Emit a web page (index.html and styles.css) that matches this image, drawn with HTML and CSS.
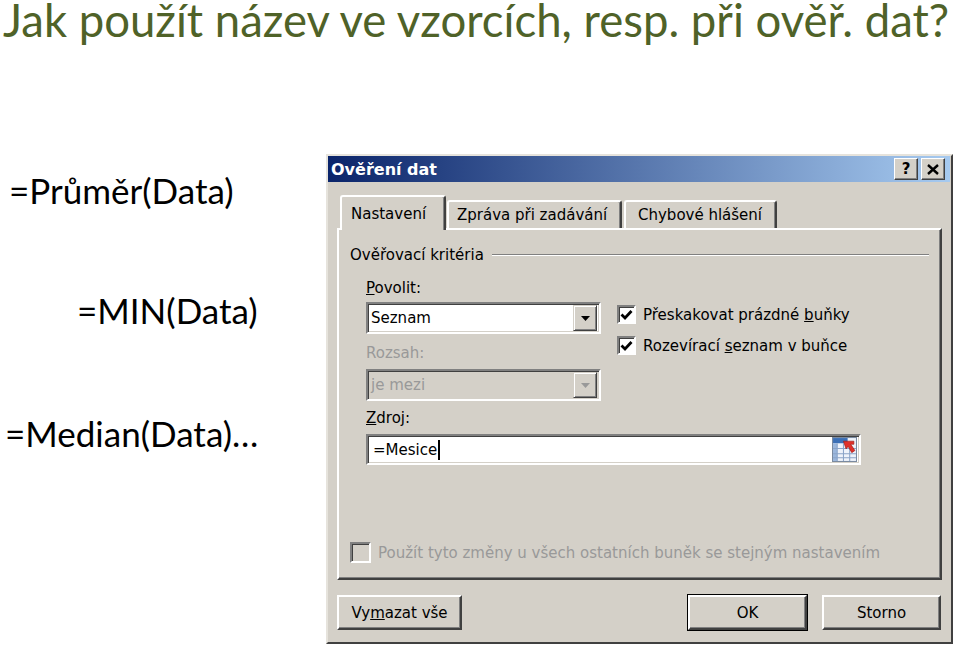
FILE: index.html
```html
<!DOCTYPE html>
<html lang="cs">
<head>
    <meta charset="UTF-8">
    <meta name="viewport" content="width=device-width, initial-scale=1.0">
    <title>Jak použít název ve vzorcích</title>
    <link rel="stylesheet" href="styles.css">
</head>
<body>
    <div class="slide">
        <h1 class="slide-title">Jak použít název ve vzorcích, resp. při ověř. dat?</h1>
        <div class="slide-body">
            <div class="formulas">
                <p class="formula formula-avg">=Průměr(Data)</p>
                <p class="formula formula-min">=MIN(Data)</p>
                <p class="formula formula-median">=Median(Data)…</p>
            </div>

            <div class="dialog">
                <div class="titlebar">
                    <span class="titlebar-text">Ověření dat</span>
                    <div class="titlebar-buttons">
                        <span class="tb-btn tb-help">?</span>
                        <span class="tb-btn">
                            <svg width="12" height="11" viewBox="0 0 12 11">
                                <path d="M1 1 L11 10 M11 1 L1 10" stroke="#000" stroke-width="2.4" fill="none"/>
                            </svg>
                        </span>
                    </div>
                </div>

                <div class="dialog-content">
                    <div class="tabs">
                        <div class="tab tab-active">Nastavení</div>
                        <div class="tab tab-msg">Zpráva při zadávání</div>
                        <div class="tab tab-err">Chybové hlášení</div>
                    </div>

                    <div class="tab-panel">
                        <div class="group-title">
                            <span>Ověřovací kritéria</span>
                            <span class="etched-line"></span>
                        </div>

                        <div class="criteria">
                            <div class="criteria-left">
                                <div class="field-label label-allow"><u>P</u>ovolit:</div>
                                <div class="combo">
                                    <span class="combo-text">Seznam</span>
                                    <span class="combo-btn">
                                        <svg width="9" height="5" viewBox="0 0 9 5"><path d="M0 0 H9 L4.5 5 Z" fill="#000"/></svg>
                                    </span>
                                </div>
                                <div class="field-label label-range disabled">Rozsah:</div>
                                <div class="combo combo-disabled">
                                    <span class="combo-text">je mezi</span>
                                    <span class="combo-btn">
                                        <svg width="9" height="5" viewBox="0 0 9 5"><path d="M0 0 H9 L4.5 5 Z" fill="#999"/></svg>
                                    </span>
                                </div>
                            </div>
                            <div class="criteria-right">
                                <div class="check check-first">
                                    <span class="check-box">
                                        <svg width="13" height="12" viewBox="0 0 13 12"><path d="M1.5 5.5 L5 9 L11.5 2" stroke="#000" stroke-width="2.8" fill="none"/></svg>
                                    </span>
                                    <span>Přeskakovat prázdné <u>b</u>uňky</span>
                                </div>
                                <div class="check check-second">
                                    <span class="check-box">
                                        <svg width="13" height="12" viewBox="0 0 13 12"><path d="M1.5 5.5 L5 9 L11.5 2" stroke="#000" stroke-width="2.8" fill="none"/></svg>
                                    </span>
                                    <span>Rozevírací <u>s</u>eznam v buňce</span>
                                </div>
                            </div>
                        </div>

                        <div class="field-label label-source"><u>Z</u>droj:</div>
                        <div class="ref-edit">
                            <span class="ref-text">=Mesice</span><span class="caret"></span>
                            <span class="ref-btn">
                                <svg width="25" height="25" viewBox="0 0 24 24">
                                    <rect x="0.5" y="0.5" width="23" height="23" fill="#eef3fb" stroke="#7a8aa0"/>
                                    <rect x="1" y="1" width="14" height="5" fill="#3b6fb6"/>
                                    <rect x="1" y="6" width="4" height="17" fill="#9ab6dc"/>
                                    <path d="M1 11 H23 M1 16 H23 M1 20 H23 M5 6 V23 M11 6 V23 M17 6 V23" stroke="#8aa4c8" stroke-width="1"/>
                                    <path d="M11 4 L21 4 L21 7 L18 7 L22 13 L19 15 L15.5 9 L13.5 11.5 Z" fill="#e0302a" stroke="#9a1a14" stroke-width="0.6"/>
                                </svg>
                            </span>
                        </div>

                        <div class="check check-apply disabled">
                            <span class="check-box"></span>
                            <span>Použít tyto změny u všech ostatních buněk se stejným nastavením</span>
                        </div>
                    </div>

                    <div class="dialog-buttons">
                        <span class="btn btn-clear">Vy<u>m</u>azat vše</span>
                        <span class="btn btn-ok">OK</span>
                        <span class="btn btn-cancel">Storno</span>
                    </div>
                </div>
            </div>
        </div>
    </div>
</body>
</html>
```

FILE: styles.css
```css
body {
    margin: 0;
    background: #fff;
    font-family: Lato, "Noto Sans", sans-serif;
}

.slide {
    width: 960px;
    height: 650px;
    overflow: hidden;
}

.slide-title {
    margin: 0;
    padding-left: 3px;
    height: 40px;
    font-size: 45.5px;
    font-weight: normal;
    line-height: 40px;
    color: #4f6228;
    white-space: nowrap;
}

.slide-body {
    display: flex;
    margin-top: 114px;
}

/* left column with formulas */
.formulas {
    width: 326px;
    flex-shrink: 0;
}

.formula {
    margin: 0;
    font-size: 35px;
    line-height: 40px;
    color: #000;
    white-space: nowrap;
}

.formula-avg {
    margin-top: 16px;
    padding-left: 9px;
}

.formula-min {
    margin-top: 80px;
    padding-left: 77px;
}

.formula-median {
    margin-top: 83px;
    padding-left: 5px;
}

/* the Windows dialog */
.dialog {
    width: 627px;
    height: 490px;
    box-sizing: border-box;
    background: #d4d0c8;
    border: 2px solid;
    border-color: #e6e3dc #404040 #404040 #e6e3dc;
    padding: 0 1px 1px 0;
    font-family: "DejaVu Sans", sans-serif;
    font-size: 15px;
    color: #000;
}

.titlebar {
    height: 26px;
    display: flex;
    align-items: center;
    justify-content: space-between;
    background: linear-gradient(to right, #0a246a, #a6caf0);
    padding: 0 5px 0 3px;
}

.titlebar-text {
    color: #fff;
    font-weight: bold;
    font-size: 16px;
}

.titlebar-buttons {
    display: flex;
    gap: 3px;
}

.tb-btn {
    width: 24px;
    height: 22px;
    box-sizing: border-box;
    display: flex;
    align-items: center;
    justify-content: center;
    background: #d4d0c8;
    border: 1px solid;
    border-color: #fff #404040 #404040 #fff;
    box-shadow: inset -1px -1px #808080;
    font-weight: bold;
    font-size: 15px;
}

.dialog-content {
    padding: 13px 8px 0 9px;
}

/* tabs */
.tabs {
    display: flex;
    align-items: flex-end;
    height: 33px;
    padding-left: 3px;
}

.tab {
    height: 28px;
    box-sizing: border-box;
    border: 2px solid;
    border-color: #fff #404040 transparent #fff;
    border-bottom: none;
    border-radius: 3px 3px 0 0;
    box-shadow: inset -1px 0 #808080;
    line-height: 26px;
    white-space: nowrap;
}

.tab-active {
    position: relative;
    z-index: 1;
    width: 106px;
    height: 35px;
    margin-bottom: -2px;
    padding-left: 9px;
    line-height: 34px;
    background: #d4d0c8;
}

.tab-msg {
    width: 175px;
    margin-left: 1px;
    padding-left: 8px;
}

.tab-err {
    width: 153px;
    margin-left: 2px;
    padding-left: 12px;
}

.tab-panel {
    height: 352px;
    box-sizing: border-box;
    display: flex;
    flex-direction: column;
    border: 2px solid;
    border-color: #fff #404040 #404040 #fff;
    box-shadow: inset -1px -1px #808080;
    padding: 0 11px 15px 11px;
}

.group-title {
    display: flex;
    align-items: center;
    margin-top: 16px;
    line-height: 18px;
}

.etched-line {
    flex: 1;
    margin-left: 8px;
    border-top: 1px solid #808080;
    border-bottom: 1px solid #fff;
}

.criteria {
    display: flex;
    padding-left: 16px;
}

.criteria-left {
    width: 235px;
}

.criteria-right {
    margin-left: 16px;
    padding-top: 41px;
}

.field-label {
    line-height: 18px;
}

.label-allow {
    margin-top: 15px;
}

.label-range {
    margin-top: 10px;
}

.label-source {
    margin-top: 8px;
    padding-left: 16px;
}

.disabled {
    color: #999;
}

.combo {
    display: flex;
    align-items: center;
    justify-content: space-between;
    height: 32px;
    margin-top: 5px;
    box-sizing: border-box;
    background: #fff;
    border: 2px solid;
    border-color: #808080 #fff #fff #808080;
    box-shadow: inset 1px 1px #404040, inset -1px -1px #d4d0c8;
    padding: 0 2px 0 3px;
}

.combo-disabled {
    margin-top: 7px;
    background: #d4d0c8;
    color: #999;
}

.combo-btn {
    width: 24px;
    height: 26px;
    box-sizing: border-box;
    display: flex;
    align-items: center;
    justify-content: center;
    background: #d4d0c8;
    border: 1px solid;
    border-color: #d4d0c8 #404040 #404040 #d4d0c8;
    box-shadow: inset 1px 1px #fff, inset -1px -1px #808080;
}

/* checkboxes */
.check {
    display: flex;
    align-items: center;
    gap: 7px;
    white-space: nowrap;
}

.check-second {
    margin-top: 12px;
}

.check-box {
    width: 19px;
    height: 19px;
    box-sizing: border-box;
    display: flex;
    align-items: center;
    justify-content: center;
    background: #fff;
    border: 2px solid;
    border-color: #808080 #fff #fff #808080;
    box-shadow: inset 1px 1px #404040;
}

.check-apply {
    margin-top: auto;
}

.check-apply .check-box {
    width: 21px;
    height: 21px;
    background: #d4d0c8;
}

/* source field */
.ref-edit {
    display: flex;
    align-items: center;
    width: 495px;
    height: 31px;
    margin: 7px 0 0 16px;
    box-sizing: border-box;
    background: #fff;
    border: 2px solid;
    border-color: #808080 #fff #fff #808080;
    box-shadow: inset 1px 1px #404040, inset -1px -1px #d4d0c8;
    padding: 0 2px 0 5px;
}

.caret {
    width: 2px;
    height: 20px;
    margin-left: 1px;
    background: #000;
}

.ref-btn {
    margin-left: auto;
    display: flex;
}

/* bottom buttons */
.dialog-buttons {
    display: flex;
    margin-top: 15px;
}

.btn {
    height: 35px;
    box-sizing: border-box;
    display: flex;
    align-items: center;
    justify-content: center;
    border: 2px solid;
    border-color: #fff #404040 #404040 #fff;
    box-shadow: inset -1px -1px #808080;
}

.btn-clear {
    width: 125px;
}

.btn-ok {
    width: 119px;
    margin-left: auto;
    outline: 1px solid #000;
}

.btn-cancel {
    width: 119px;
    margin-left: 15px;
    margin-right: 1px;
}
```
